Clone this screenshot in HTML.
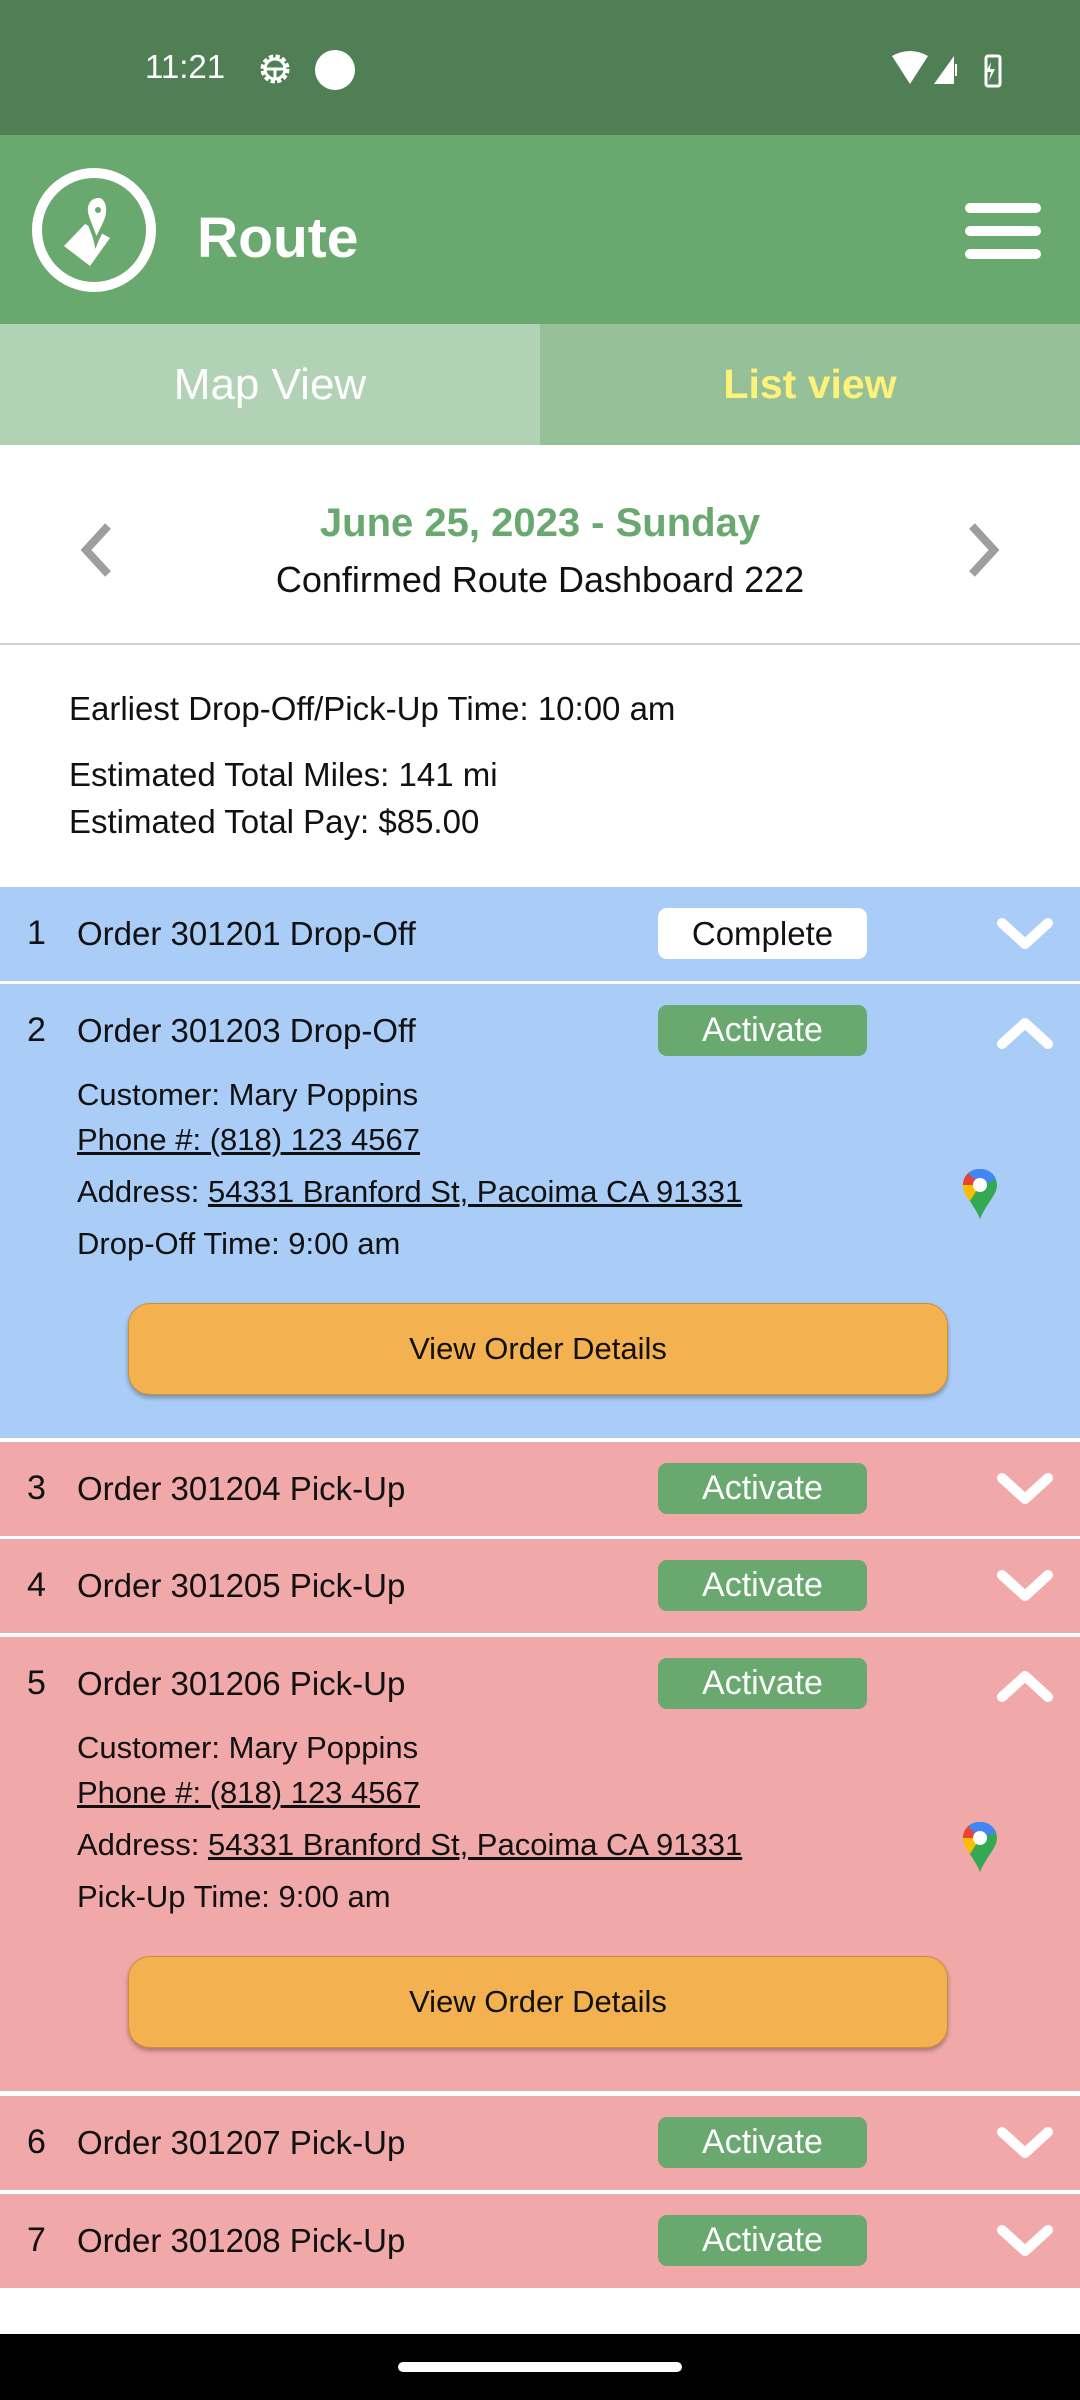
<!DOCTYPE html>
<html><head><meta charset="utf-8"><style>
*{margin:0;padding:0;box-sizing:border-box}
body{width:1080px;height:2400px;position:relative;background:#fff;font-family:"Liberation Sans",Roboto,sans-serif;overflow:hidden}
.abs{position:absolute}
.row{position:absolute;left:0;width:1080px}
.blue{background:#aacdf7}.red{background:#f0a9a8}
.num{position:absolute;left:27px;top:27px;font-size:34px;color:#111}
.lab{position:absolute;left:77px;top:28px;font-size:33px;color:#111}
.badge{position:absolute;left:658px;top:21px;width:209px;height:51px;border-radius:9px;font-size:34px;text-align:center;line-height:51px}
.act{background:#69a86e;color:#fff}
.cmp{background:#fff;color:#111;font-size:33px}
.chev{position:absolute;left:995px;top:28px}
.det{position:absolute;left:77px;font-size:31px;color:#111}
.u{text-decoration:underline}
.btn{position:absolute;left:128px;width:820px;height:92px;background:#f3b24f;border-radius:22px;box-shadow:0 3px 5px rgba(0,0,0,.3);border:1px solid #c9903a;text-align:center;line-height:90px;font-size:31px;color:#111}
</style></head><body>
<div class="abs" style="left:0;top:0;width:1080px;height:135px;background:#507f55"></div>
<div class="abs" style="left:145px;top:48px;color:#fff;font-size:33px">11:21</div>
<svg class="abs" style="left:256px;top:50px" width="38" height="38" viewBox="0 0 38 38"><circle cx="19" cy="19" r="12" fill="none" stroke="#fff" stroke-width="5" stroke-dasharray="4 2.3"/><circle cx="19" cy="19" r="10" fill="none" stroke="#fff" stroke-width="3"/><path d="M10 19h18M19 19v10" stroke="#fff" stroke-width="3"/></svg>
<div class="abs" style="left:315px;top:50px;width:40px;height:40px;border-radius:50%;background:#fff"></div>
<svg class="abs" style="left:890px;top:50px" width="115" height="40" viewBox="0 0 115 40"><path d="M2 6 Q20 -4 38 6 L20 34Z" fill="#fff"/><path d="M44 34 L64 6 V34Z" fill="#fff"/><rect x="65" y="14" width="2" height="12" fill="#fff"/><rect x="104" y="6" width="14" height="30" rx="2" fill="none" stroke="#fff" stroke-width="3" transform="translate(-8 0)"/><path d="M101 12 l-5 10 h5 l-2 9 6-12 h-5z" fill="#fff"/></svg>
<div class="abs" style="left:0;top:135px;width:1080px;height:189px;background:#69a86e"></div>
<svg class="abs" style="left:30px;top:166px" width="128" height="128" viewBox="0 0 128 128"><circle cx="64" cy="64" r="57" fill="none" stroke="#fff" stroke-width="10"/><path d="M34 80 L55 58 L80 72 L60 100 Z" fill="#fff"/><path d="M69 30 c-10 0-14 8-13 16 c1 8 8 20 10 30 c4-10 12-22 12-30 c1-8-3-16-9-16z" fill="#fff" stroke="#69a86e" stroke-width="4"/><circle cx="68" cy="44" r="3" fill="#69a86e"/></svg>
<div class="abs" style="left:197px;top:205px;color:#fff;font-size:57px;font-weight:bold">Route</div>
<div class="abs" style="left:965px;top:203px;width:76px;height:10px;border-radius:5px;background:#fff"></div>
<div class="abs" style="left:965px;top:226px;width:76px;height:10px;border-radius:5px;background:#fff"></div>
<div class="abs" style="left:965px;top:249px;width:76px;height:10px;border-radius:5px;background:#fff"></div>
<div class="abs" style="left:0;top:324px;width:540px;height:121px;background:#b2d2b5;color:#fff;font-size:44px;text-align:center;line-height:121px">Map View</div>
<div class="abs" style="left:540px;top:324px;width:540px;height:121px;background:#95c098;color:#fef27a;font-size:41px;font-weight:bold;text-align:center;line-height:121px">List view</div>
<div class="abs" style="left:0;top:501px;width:1080px;text-align:center;color:#69a86e;font-size:40px;font-weight:bold">June 25, 2023 - Sunday</div>
<div class="abs" style="left:0;top:559px;width:1080px;text-align:center;color:#111;font-size:36px">Confirmed Route Dashboard 222</div>
<svg class="abs" style="left:78px;top:522px" width="36" height="56" viewBox="0 0 36 56"><path d="M30 4 L8 28 L30 52" fill="none" stroke="#9e9e9e" stroke-width="8"/></svg>
<svg class="abs" style="left:966px;top:522px" width="36" height="56" viewBox="0 0 36 56"><path d="M6 4 L28 28 L6 52" fill="none" stroke="#9e9e9e" stroke-width="8"/></svg>
<div class="abs" style="left:0;top:643px;width:1080px;height:2px;background:#d0d0d0"></div>
<div class="abs" style="left:69px;top:690px;font-size:33px;color:#111">Earliest Drop-Off/Pick-Up Time: 10:00 am</div>
<div class="abs" style="left:69px;top:756px;font-size:33px;color:#111">Estimated Total Miles: 141 mi</div>
<div class="abs" style="left:69px;top:803px;font-size:33px;color:#111">Estimated Total Pay: $85.00</div>

<svg width="0" height="0" style="position:absolute"><defs>
<symbol id="dn" viewBox="0 0 60 40"><path d="M7 8 L30 29 L53 8" fill="none" stroke="#fff" stroke-width="10" stroke-linecap="round" stroke-linejoin="round"/></symbol>
<symbol id="up" viewBox="0 0 60 40"><path d="M7 32 L30 11 L53 32" fill="none" stroke="#fff" stroke-width="10" stroke-linecap="round" stroke-linejoin="round"/></symbol>
<symbol id="pin" viewBox="0 0 36 52"><path d="M18 1 C8 1 1 8 1 17 C1 27 12 36 18 51 C24 36 35 27 35 17 C35 8 28 1 18 1Z" fill="#34a853"/><path d="M1 17 C1 8 8 1 18 1 L18 17Z" fill="#ea4335"/><path d="M6 5 C10 2 14 1 18 1 C26 1 32 5 34 12 L18 17Z" fill="#4285f4"/><path d="M1 17 L18 17 L8 33 C4 28 1 23 1 17Z" fill="#fbbc04"/><circle cx="18" cy="17" r="7" fill="#fff"/></symbol>
</defs></svg>

<div class="row blue" style="top:887px;height:94px"><div class="num">1</div><div class="lab">Order 301201 Drop-Off</div><div class="badge cmp">Complete</div><svg class="chev" width="60" height="40"><use href="#dn"/></svg></div>
<div class="row blue" style="top:984px;height:454px"><div class="num">2</div><div class="lab">Order 301203 Drop-Off</div><div class="badge act">Activate</div><svg class="chev" width="60" height="40"><use href="#up"/></svg>
<div class="det" style="top:93px">Customer: Mary Poppins</div>
<div class="det u" style="top:138px">Phone #: (818) 123 4567</div>
<div class="det" style="top:190px">Address: <span class="u">54331 Branford St, Pacoima CA 91331</span></div>
<div class="det" style="top:242px">Drop-Off Time: 9:00 am</div>
<svg class="abs" style="left:962px;top:184px" width="36" height="52"><use href="#pin"/></svg>
<div class="btn" style="top:319px">View Order Details</div></div>
<div class="row red" style="top:1442px;height:94px"><div class="num">3</div><div class="lab">Order 301204 Pick-Up</div><div class="badge act">Activate</div><svg class="chev" width="60" height="40"><use href="#dn"/></svg></div>
<div class="row red" style="top:1539px;height:94px"><div class="num">4</div><div class="lab">Order 301205 Pick-Up</div><div class="badge act">Activate</div><svg class="chev" width="60" height="40"><use href="#dn"/></svg></div>
<div class="row red" style="top:1637px;height:454px"><div class="num">5</div><div class="lab">Order 301206 Pick-Up</div><div class="badge act">Activate</div><svg class="chev" width="60" height="40"><use href="#up"/></svg>
<div class="det" style="top:93px">Customer: Mary Poppins</div>
<div class="det u" style="top:138px">Phone #: (818) 123 4567</div>
<div class="det" style="top:190px">Address: <span class="u">54331 Branford St, Pacoima CA 91331</span></div>
<div class="det" style="top:242px">Pick-Up Time: 9:00 am</div>
<svg class="abs" style="left:962px;top:184px" width="36" height="52"><use href="#pin"/></svg>
<div class="btn" style="top:319px">View Order Details</div></div>
<div class="row red" style="top:2096px;height:94px"><div class="num">6</div><div class="lab">Order 301207 Pick-Up</div><div class="badge act">Activate</div><svg class="chev" width="60" height="40"><use href="#dn"/></svg></div>
<div class="row red" style="top:2194px;height:94px"><div class="num">7</div><div class="lab">Order 301208 Pick-Up</div><div class="badge act">Activate</div><svg class="chev" width="60" height="40"><use href="#dn"/></svg></div>

<div class="abs" style="left:0;top:2334px;width:1080px;height:66px;background:#000"></div>
<div class="abs" style="left:398px;top:2362px;width:284px;height:10px;border-radius:5px;background:#fff"></div>
</body></html>
